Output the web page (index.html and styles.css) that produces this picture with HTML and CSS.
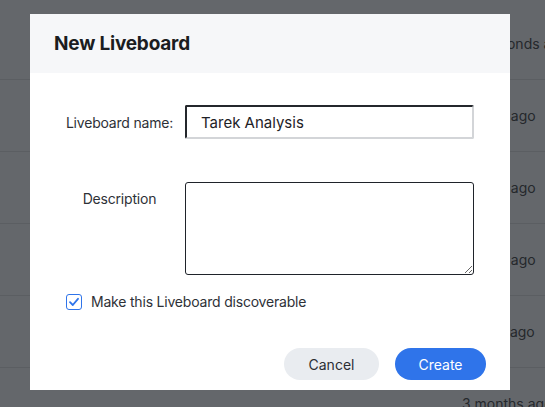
FILE: index.html
```html
<!DOCTYPE html>
<html>
<head>
<meta charset="utf-8">
<link rel="stylesheet" href="styles.css">
</head>
<body>
<div class="list">
  <div class="row"><span class="when">30 seconds ago</span></div>
  <div class="row"><span class="when">1 week ago</span></div>
  <div class="row"><span class="when">1 week ago</span></div>
  <div class="row"><span class="when">1 week ago</span></div>
  <div class="row"><span class="when">2 days ago</span></div>
  <div class="row"><span class="when">3 months ago</span></div>
</div>
<div class="modal">
  <div class="modal-header">New Liveboard</div>
  <div class="modal-body">
    <div class="field">
      <label class="label">Liveboard name:</label>
      <input class="text-input" type="text" value="Tarek Analysis">
    </div>
    <div class="field field-desc">
      <label class="label label-desc">Description</label>
      <textarea class="text-area"></textarea>
    </div>
    <div class="check-row">
      <span class="checkbox"><svg width="14" height="14" viewBox="0 0 14 14"><path d="M3 7.2 L5.8 10 L11 3.8" fill="none" stroke="#2f74ea" stroke-width="1.8" stroke-linecap="round" stroke-linejoin="round"/></svg></span>
      <span class="check-label">Make this Liveboard discoverable</span>
    </div>
    <div class="actions">
      <button class="btn btn-cancel">Cancel</button>
      <button class="btn btn-create">Create</button>
    </div>
  </div>
</div>
</body>
</html>
```
FILE: styles.css
```css
html, body {
  margin: 0;
  padding: 0;
}
body {
  width: 545px;
  height: 407px;
  overflow: hidden;
  background: #64676b;
  font-family: Inter, "Liberation Sans", sans-serif;
  position: relative;
}
.list {
  padding-top: 8px;
}
.row {
  height: 72px;
  box-sizing: border-box;
  border-bottom: 1px solid #5b5e62;
  display: flex;
  align-items: center;
  padding-left: 462px;
  font-size: 14px;
  color: #25282c;
  white-space: nowrap;
}
.modal {
  position: absolute;
  left: 30px;
  top: 14px;
  width: 480px;
  height: 376px;
  background: #ffffff;
  display: flex;
  flex-direction: column;
}
.modal-header {
  height: 59px;
  box-sizing: border-box;
  background: #f6f7f9;
  padding-left: 24px;
  display: flex;
  align-items: center;
  font-size: 19px;
  font-weight: 700;
  color: #1b1d21;
  letter-spacing: -0.2px;
}
.modal-body {
  padding: 32px 24px 10px 24px;
  display: flex;
  flex-direction: column;
}
.field {
  display: flex;
  align-items: center;
}
.label {
  width: 131px;
  text-align: center;
  font-size: 14px;
  color: #2e3137;
  letter-spacing: -0.2px;
}
.text-input {
  width: 289px;
  height: 34px;
  box-sizing: border-box;
  border-style: solid;
  border-width: 2px;
  border-color: #24272c #d3d5d8 #d3d5d8 #24272c;
  border-radius: 2px;
  padding: 0 0 0 14px;
  font-family: Inter, "Liberation Sans", sans-serif;
  font-size: 15px;
  color: #1e2126;
  outline: none;
}
.field-desc {
  margin-top: 43px;
  align-items: flex-start;
}
.label-desc {
  padding-top: 8px;
}
.text-area {
  width: 289px;
  height: 93px;
  box-sizing: border-box;
  border: 1px solid #1f232a;
  border-radius: 3px;
  margin: 0;
  padding: 4px;
  font-family: Inter, "Liberation Sans", sans-serif;
  font-size: 14px;
}
.check-row {
  margin-top: 18px;
  margin-left: 12px;
  display: flex;
  align-items: center;
  gap: 9px;
}
.checkbox {
  width: 16px;
  height: 16px;
  box-sizing: border-box;
  border: 1.5px solid #2f74ea;
  border-radius: 3px;
  display: flex;
  align-items: center;
  justify-content: center;
  background: #fff;
}
.check-label {
  font-size: 14px;
  color: #2e3137;
  letter-spacing: -0.2px;
}
.actions {
  margin-top: 38px;
  display: flex;
  justify-content: flex-end;
  gap: 16px;
}
.btn {
  height: 32px;
  border: none;
  border-radius: 16px;
  font-family: Inter, "Liberation Sans", sans-serif;
  font-size: 14px;
  padding: 0;
}
.btn-cancel {
  width: 95px;
  background: #e9ecf0;
  color: #2b2e34;
}
.btn-create {
  width: 91px;
  background: #2f74ea;
  color: #ffffff;
}
```
